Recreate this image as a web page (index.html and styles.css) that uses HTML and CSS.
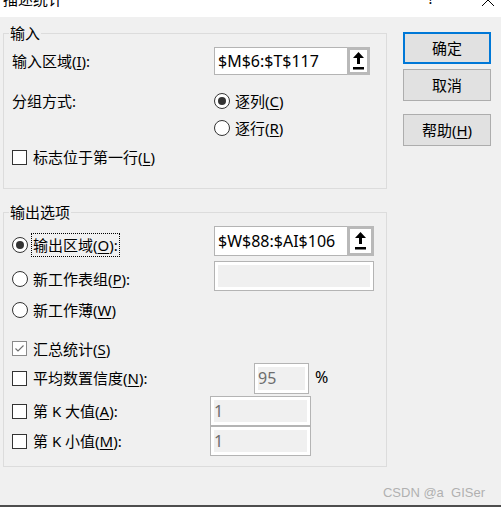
FILE: index.html
```html
<!DOCTYPE html>
<html lang="zh">
<head>
  <meta charset="UTF-8">
  <title>描述统计</title>
  <link rel="stylesheet" href="styles.css">
</head>
<body>
  <div class="titlebar">
    <span class="title">描述统计</span>
    <span class="help-mark">?</span>
    <svg class="close" width="14" height="17" viewBox="0 0 14 17">
      <path d="M1 -6 L13 6 M13 -6 L1 6" stroke="#000" stroke-width="1" fill="none"/>
    </svg>
  </div>

  <div class="dialog">
    <div class="left">
      <fieldset class="group group-input">
        <legend>输入</legend>

        <div class="row r-range">
          <span class="field-label">输入区域(<u>I</u>):</span>
          <div class="ref">
            <span class="ref-text">$M$6:$T$117</span>
            <span class="ref-btn">
              <svg width="11" height="18" viewBox="0 0 11 18"><path d="M5.5 0 L11 6 H7 V12 H4 V6 H0 Z"/><rect x="0" y="15" width="11" height="2.5"/></svg>
            </span>
          </div>
        </div>

        <div class="row r-group">
          <span class="field-label">分组方式:</span>
          <span class="radio on"></span>
          <span class="opt-text">逐列(<u>C</u>)</span>
        </div>

        <div class="row r-row">
          <span class="field-label"></span>
          <span class="radio"></span>
          <span class="opt-text">逐行(<u>R</u>)</span>
        </div>

        <div class="row r-header">
          <span class="check"></span>
          <span class="opt-text">标志位于第一行(<u>L</u>)</span>
        </div>
      </fieldset>

      <fieldset class="group group-output">
        <legend>输出选项</legend>

        <div class="row r-out">
          <div class="opt opt-wide shift-8">
            <span class="radio on"></span>
            <span class="opt-text focus">输出区域(<u>O</u>):</span>
          </div>
          <div class="ref ref-out">
            <span class="ref-text">$W$88:$AI$106</span>
            <span class="ref-btn">
              <svg width="11" height="18" viewBox="0 0 11 18"><path d="M5.5 0 L11 6 H7 V12 H4 V6 H0 Z"/><rect x="0" y="15" width="11" height="2.5"/></svg>
            </span>
          </div>
        </div>

        <div class="row r-sheet">
          <div class="opt opt-wide shift-6">
            <span class="radio"></span>
            <span class="opt-text">新工作表组(<u>P</u>):</span>
          </div>
          <div class="blank"></div>
        </div>

        <div class="row r-book">
          <div class="opt">
            <span class="radio"></span>
            <span class="opt-text">新工作薄(<u>W</u>)</span>
          </div>
        </div>

        <div class="row r-summary">
          <div class="opt">
            <span class="check on">
              <svg width="13" height="13" viewBox="0 0 13 13"><path d="M2.5 6.5 L5 9 L10.5 3.5" stroke="#6e6e6e" stroke-width="1.1" fill="none"/></svg>
            </span>
            <span class="opt-text">汇总统计(<u>S</u>)</span>
          </div>
        </div>

        <div class="row r-conf">
          <div class="opt opt-conf">
            <span class="check"></span>
            <span class="opt-text">平均数置信度(<u>N</u>):</span>
          </div>
          <span class="num num-conf">95</span>
          <span class="pct">%</span>
        </div>

        <div class="row r-k1">
          <div class="opt opt-k">
            <span class="check"></span>
            <span class="opt-text">第 K 大值(<u>A</u>):</span>
          </div>
          <span class="num num-k">1</span>
        </div>

        <div class="row r-k2">
          <div class="opt opt-k">
            <span class="check"></span>
            <span class="opt-text">第 K 小值(<u>M</u>):</span>
          </div>
          <span class="num num-k">1</span>
        </div>
      </fieldset>
    </div>

    <div class="right">
      <div class="btn btn-default">确定</div>
      <div class="btn btn-cancel">取消</div>
      <div class="btn btn-help">帮助(<u>H</u>)</div>
    </div>
  </div>

  <div class="footer">
    <div class="watermark">CSDN @a&nbsp;&nbsp;GISer</div>
    <div class="bottom-line"></div>
  </div>
</body>
</html>
```

FILE: styles.css
```css
body {
  margin: 0;
  width: 501px;
  height: 507px;
  background: #f0f0f0;
  font-family: "Noto Sans", "Noto Sans CJK SC", sans-serif;
  font-size: 15px;
  line-height: 20px;
  color: #000;
  display: flex;
  flex-direction: column;
  overflow: hidden;
}

u {
  text-decoration: underline;
  text-underline-offset: 2px;
}

/* title bar, cut off at the top */
.titlebar {
  height: 17px;
  background: #fff;
  display: flex;
  overflow: hidden;
  flex-shrink: 0;
}

.title {
  margin: -11px 0 0 3px;
}

.help-mark {
  width: 8px;
  text-align: center;
  margin: -12px 46px 0 auto;
}

.close {
  margin-right: 6px;
}

/* dialog body */
.dialog {
  display: flex;
  padding-left: 3px;
}

.left {
  width: 384px;
  padding-top: 6px;
}

.right {
  width: 88px;
  margin-left: 16px;
  padding-top: 15px;
  display: flex;
  flex-direction: column;
}

.group {
  margin: 0;
  padding: 0 8px;
  border: 1px solid #dcdcdc;
  min-width: 0;
}

.group legend {
  margin-left: -3px;
  padding: 0 1px;
  line-height: 20px;
  height: 20px;
}

.group-input {
  padding-top: 4px;
  padding-bottom: 18px;
}

.group-output {
  margin-top: 13px;
  padding-top: 4px;
  padding-bottom: 10px;
}

.row {
  display: flex;
  align-items: center;
}

.field-label {
  flex: 0 0 202px;
}

/* input group rows */
.r-range { height: 28px; }
.r-group { height: 26px; margin-top: 13px; }
.r-row { height: 26px; margin-top: 1px; }
.r-header { height: 26px; margin-top: 3px; }

/* output group rows */
.r-out { height: 30px; }
.r-sheet { height: 30px; margin-top: 5px; }
.r-book { height: 30px; margin-top: 4px; }
.r-summary { height: 29px; margin-top: 9px; }
.r-conf { height: 30px; }
.r-k1 { height: 30px; margin-top: 3px; }
.r-k2 { height: 30px; }

.opt {
  display: flex;
  align-items: center;
}

.opt-wide { flex: 0 0 202px; }
.opt-conf { flex: 0 0 242px; }
.opt-k { flex: 0 0 198px; }

.shift-8 { margin-top: 8px; }
.shift-6 { margin-top: 6px; }

.opt-text {
  border: 1px dotted transparent;
  padding: 0 1px;
  line-height: 22px;
}

.opt-text.focus {
  border-color: #000;
}

/* radio buttons */
.radio {
  width: 16px;
  height: 16px;
  box-sizing: border-box;
  border: 1px solid #333;
  border-radius: 50%;
  background: #fff;
  margin-right: 3px;
  display: flex;
  align-items: center;
  justify-content: center;
  flex-shrink: 0;
}

.radio.on::after {
  content: "";
  width: 8px;
  height: 8px;
  border-radius: 50%;
  background: #333;
}

/* check boxes */
.check {
  width: 15px;
  height: 15px;
  box-sizing: border-box;
  border: 1px solid #333;
  background: #fff;
  margin-right: 4px;
  display: flex;
  align-items: center;
  justify-content: center;
  flex-shrink: 0;
}

.check.on {
  border-color: #8a8a8a;
}

/* reference boxes */
.ref {
  display: flex;
  width: 156px;
  height: 28px;
}

.ref-out {
  width: 160px;
  height: 30px;
}

.ref-text {
  flex: 1;
  border: 1px solid #b4b4b4;
  border-right: none;
  background: #fff;
  padding-left: 3px;
  font-size: 16px;
  display: flex;
  align-items: center;
}

.ref-btn {
  width: 23px;
  box-sizing: border-box;
  border: 3px solid #b9b9b9;
  background: #fff;
  display: flex;
  align-items: center;
  justify-content: center;
}

.ref-out .ref-btn {
  width: 27px;
}

.blank {
  width: 160px;
  height: 30px;
  box-sizing: border-box;
  border: 1px solid #b4b4b4;
  background: #f0f0f0;
  box-shadow: inset 0 0 0 3px #fff;
}

.num {
  box-sizing: border-box;
  border: 1px solid #b4b4b4;
  background: #f0f0f0;
  box-shadow: inset 0 0 0 3px #fff;
  color: #6d6d6d;
  padding-left: 3px;
  font-size: 16px;
  display: flex;
  align-items: center;
}

.num-conf {
  width: 55px;
  height: 31px;
}

.num-k {
  width: 101px;
  height: 30px;
}

.pct {
  margin-left: 6px;
  margin-top: -2px;
  font-size: 16px;
}

/* buttons */
.btn {
  height: 32px;
  box-sizing: border-box;
  border: 1px solid #adadad;
  background: #e1e1e1;
  display: flex;
  align-items: center;
  justify-content: center;
}

.btn-default {
  border: 2px solid #0078d7;
}

.btn-cancel {
  margin-top: 5px;
}

.btn-help {
  margin-top: 13px;
}

/* footer */
.footer {
  margin-top: auto;
}

.watermark {
  font-family: "Liberation Sans", Arial, sans-serif;
  font-size: 13px;
  line-height: 14px;
  color: #b0b0b0;
  text-align: right;
  padding-right: 16px;
  margin-bottom: 5px;
}

.bottom-line {
  height: 2px;
  background: #4d4d4d;
}
```
